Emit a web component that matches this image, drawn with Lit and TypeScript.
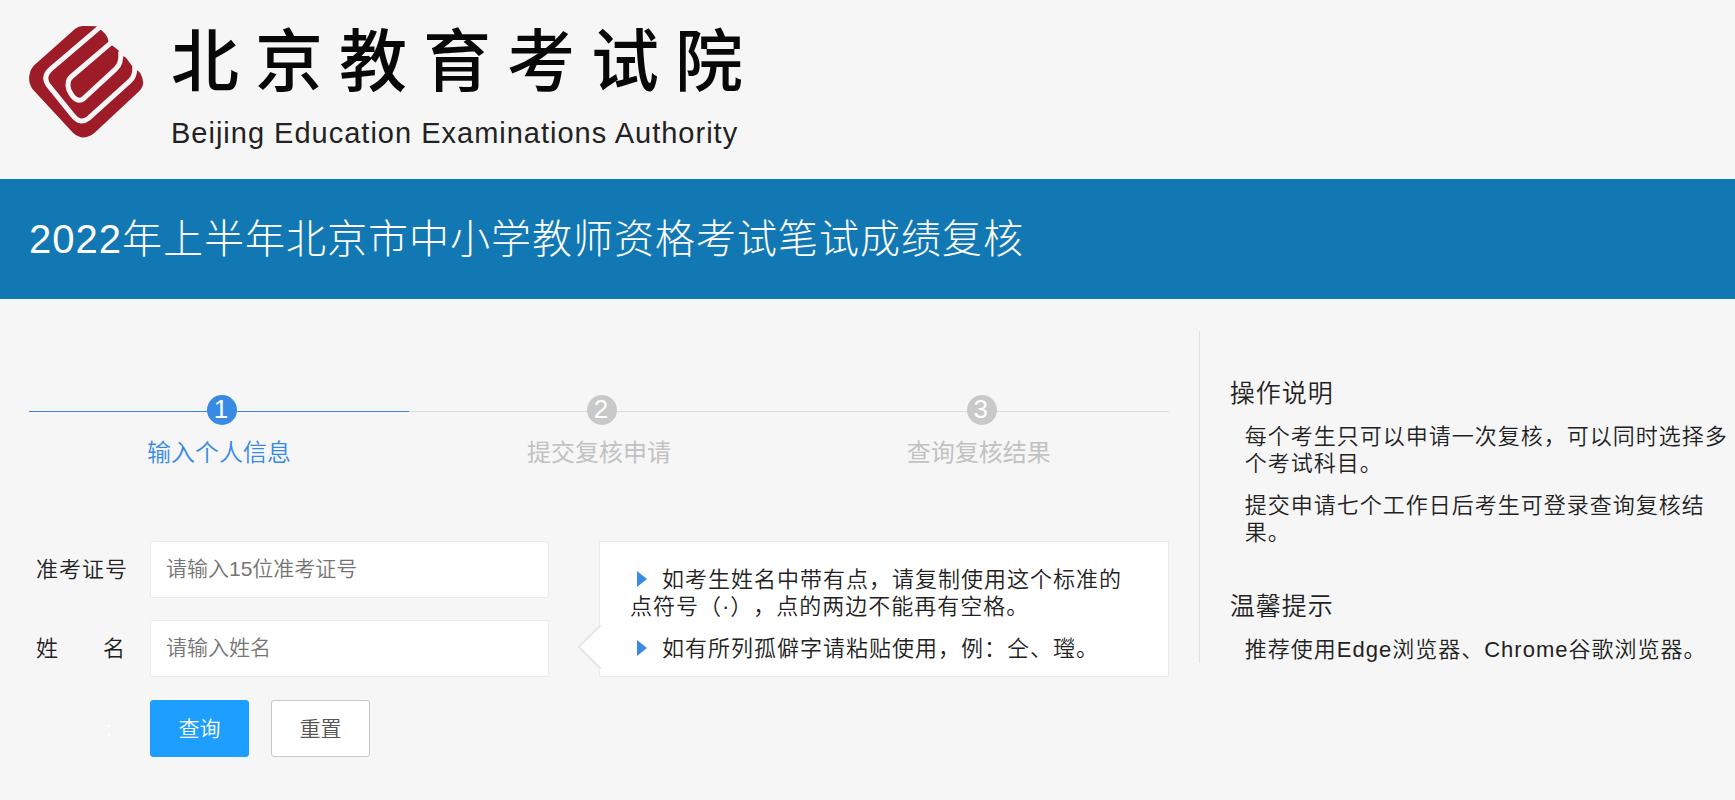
import { LitElement, html, css } from "lit";
import { customElement } from "lit/decorators.js";

const STEPS = ["输入个人信息", "提交复核申请", "查询复核结果"];

@customElement("app-root")
export class AppRoot extends LitElement {
  static styles = css`
    :host {
      display: block;
      min-height: 100vh;
      background: #f6f6f6;
      color: #222;
      font-family: "Liberation Sans", "Noto Sans CJK SC", sans-serif;
      font-weight: 350;
      font-size: 21px;
      line-height: 27px;
      text-spacing-trim: space-all;
    }
    * { box-sizing: border-box; }
    h1, h2, p, ol, ul { margin: 0; padding: 0; font-weight: inherit; }
    ol, ul { list-style: none; }

    .header {
      display: flex;
      align-items: flex-start;
      gap: 27px;
      height: 179px;
      padding: 0 29px;
      color: #080808;
    }
    .logo { flex: none; width: 115px; height: 113px; margin-top: 25px; }
    .brand { width: 572px; padding-top: 18px; }
    .name {
      display: flex;
      justify-content: space-between;
      font-size: 68px;
      line-height: 88px;
      font-weight: 500;
    }
    .english {
      margin-top: 10px;
      color: #222;
      font-size: 29px;
      line-height: 34px;
      letter-spacing: 1px;
      white-space: nowrap;
    }

    .banner { padding: 30px 29px; background: #1278b4; color: #fff; }
    .banner h1 { font-size: 40px; line-height: 60px; letter-spacing: 1px; font-weight: 300; }

    .content {
      display: grid;
      grid-template-columns: minmax(0, 24fr) minmax(0, 11fr);
      align-items: start;
      padding: 32px 0 0 29px;
    }
    .main { padding: 64px 30px 0 0; }

    .steps { display: grid; grid-template-columns: repeat(3, 1fr); text-align: center; }
    .step { color: #c2c2c2; font-size: 24px; line-height: 30px; }
    .rail {
      display: flex;
      justify-content: center;
      padding-left: 6px;
      background: linear-gradient(#dcdcdc, #dcdcdc) 0 16px / 100% 1px no-repeat;
    }
    .dot {
      width: 30px;
      height: 30px;
      padding-right: 2px;
      border-radius: 50%;
      background: #c9c9c9;
      color: #fff;
      font-size: 26px;
      line-height: 28px;
    }
    .label { margin-top: 13px; font-weight: 400; }
    .step.active { color: #388ae4; }
    .active .label { font-weight: 350; }
    .active .rail { background-image: linear-gradient(#388ae4, #388ae4); }
    .active .dot { background: #388ae4; }

    .row {
      display: grid;
      grid-template-columns: minmax(0, 52fr) minmax(0, 57fr);
      column-gap: 50px;
      margin-top: 73px;
    }
    .form { display: grid; grid-template-columns: 121px minmax(0, 1fr); row-gap: 22px; align-items: center; }
    .caption {
      display: flex;
      justify-content: space-between;
      width: 99px;
      padding: 0 2px 0 7px;
      font-size: 22px;
      letter-spacing: 1px;
    }
    .caption.wide { padding-right: 0; }
    .colon { padding-left: 77px; color: #fff; }
    .field {
      width: 100%;
      height: 57px;
      padding: 0 15px 2px;
      border: 1px solid #ebebeb;
      border-radius: 3px;
      background: #fff;
      font: inherit;
      color: #222;
    }
    .field::placeholder { color: #757575; opacity: 1; }
    .actions { display: flex; gap: 22px; padding-top: 1px; }
    .btn {
      height: 57px;
      padding: 0 27px;
      border: 1px solid #1e9fff;
      border-radius: 3px;
      background: #1e9fff;
      color: #fff;
      font: inherit;
      min-width: 99px;
    }
    .btn.plain { border-color: #c9c9c9; background: #fff; color: #555; }

    .tips {
      position: relative;
      align-self: start;
      min-height: 136px;
      padding: 24px 30px 13px;
      border: 1px solid #ebebeb;
      background: #fff;
      font-size: 22px;
      letter-spacing: 1px;
    }
    .tips::before {
      content: "";
      position: absolute;
      left: -16px;
      bottom: 13px;
      width: 30px;
      height: 30px;
      border: solid #e6e6e6;
      border-width: 0 0 2px 2px;
      background: #fff;
      transform: rotate(45deg);
    }
    .tips li + li { margin-top: 15px; }
    .mark {
      display: inline-block;
      margin: 0 15px 0 7px;
      border: solid transparent;
      border-width: 8px 0 8px 10px;
      border-left-color: #388ae4;
    }

    .aside { border-left: 1px solid #e2e2e2; padding: 47px 4px 0 30px; font-size: 22px; letter-spacing: 1px; }
    .aside h2 { font-size: 25px; line-height: 30px; }
    .aside p { margin: 15px 0 0 15px; }
    .aside p + h2 { margin-top: 45px; }
  `;

  render() {
    return html`
      <header class="header">
        <svg class="logo" viewBox="87 75 346 340" aria-hidden="true">
          <path fill="#9e1b28" d="M226 86Q238 76 254 78L290 79Q300 84 308 94Q326 108 327 132Q340 136 352 148Q366 160 363 166Q378 168 388 186Q399 196 401 210Q412 206 422 220Q436 246 427 262Q424 270 412 280L286 398Q252 428 220 400L98 268Q82 246 90 218Q94 202 112 188Z"/>
          <path fill="none" stroke="#f6f6f6" stroke-width="15" d="M302 80L154 206Q126 230 145 256L218 346Q240 376 266 356L390 244Q407 230 405 200"/>
          <path fill="none" stroke="#f6f6f6" stroke-width="15" d="M338 125L215 230Q199 244 207 270Q228 314 252 296L348 207Q366 192 363 154"/>
        </svg>
        <div class="brand">
          <div class="name">${[..."北京教育考试院"].map((c) => html`<span>${c}</span>`)}</div>
          <div class="english">Beijing Education Examinations Authority</div>
        </div>
      </header>
      <div class="banner"><h1>2022年上半年北京市中小学教师资格考试笔试成绩复核</h1></div>
      <div class="content">
        <main class="main">
          <ol class="steps">
            ${STEPS.map((s, i) => html`
              <li class="step ${i === 0 ? "active" : ""}">
                <div class="rail"><div class="dot">${i + 1}</div></div>
                <div class="label">${s}</div>
              </li>`)}
          </ol>
          <div class="row">
            <form class="form" @submit=${(e: Event) => e.preventDefault()}>
              <label class="caption wide" for="ticket">准考证号</label>
              <input class="field" id="ticket" type="text" placeholder="请输入15位准考证号">
              <label class="caption" for="fullname"><span>姓</span><span>名</span></label>
              <input class="field" id="fullname" type="text" placeholder="请输入姓名">
              <span class="colon" aria-hidden="true">:</span>
              <div class="actions">
                <button class="btn" type="submit">查询</button>
                <button class="btn plain" type="reset">重置</button>
              </div>
            </form>
            <ul class="tips">
              <li><i class="mark"></i>如考生姓名中带有点，请复制使用这个标准的点符号（·），点的两边不能再有空格。</li>
              <li><i class="mark"></i>如有所列孤僻字请粘贴使用，例：仝、㼆。</li>
            </ul>
          </div>
        </main>
        <aside class="aside">
          <h2>操作说明</h2>
          <p>每个考生只可以申请一次复核，可以同时选择多个考试科目。</p>
          <p>提交申请七个工作日后考生可登录查询复核结果。</p>
          <h2>温馨提示</h2>
          <p>推荐使用Edge浏览器、Chrome谷歌浏览器。</p>
        </aside>
      </div>
    `;
  }
}
